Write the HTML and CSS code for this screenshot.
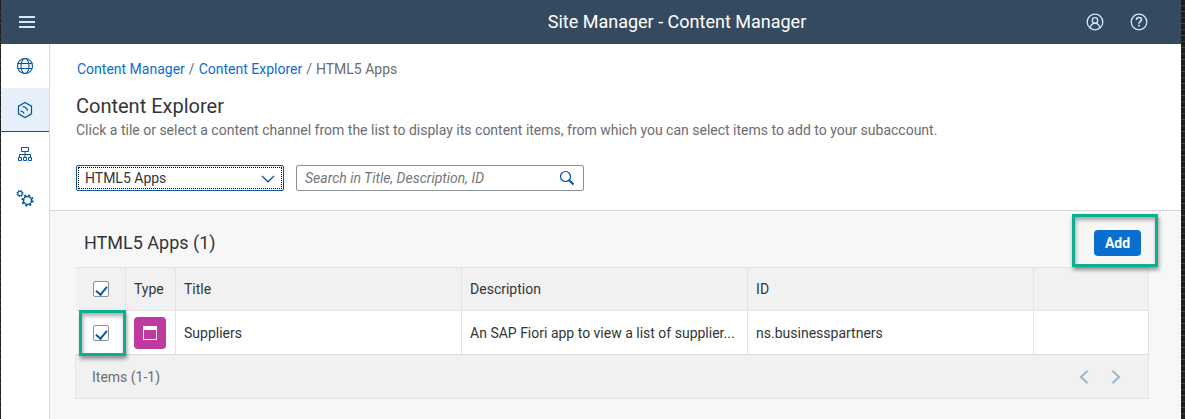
FILE: index.html
```html
<!DOCTYPE html>
<html lang="en">
<head>
<meta charset="utf-8">
<title>Site Manager - Content Manager</title>
<link rel="stylesheet" href="styles.css">
</head>
<body>
<div class="app">
  <header class="shell">
    <button class="shell-button" type="button" aria-label="Menu">
      <svg width="16" height="12" viewBox="0 0 16 12" fill="none" stroke="currentColor" stroke-width="2"><path d="M0 1h16M0 6h16M0 11h16"/></svg>
    </button>
    <h1 class="shell-title">Site Manager - Content Manager</h1>
    <div class="shell-actions">
      <button class="shell-button" type="button" aria-label="Profile">
        <svg width="18" height="18" viewBox="0 0 18 18" fill="none" stroke="currentColor" stroke-width="1.3"><circle cx="9" cy="9" r="7.8"/><circle cx="9" cy="7.4" r="2.7"/><path d="M4.4 14.6C4.6 12 6.4 10.3 9 10.3s4.4 1.700 4.600 4.300"/></svg>
      </button>
      <button class="shell-button" type="button" aria-label="Help">
        <svg width="18" height="18" viewBox="0 0 18 18" fill="none" stroke="currentColor" stroke-width="1.3"><circle cx="9" cy="9" r="7.8"/><path stroke-width="1.6" d="M6.500 7V6.500C6.500 5.200 7.500 4.500 9 4.500s2.500.8 2.500 2c0 1.700-2.500 2-2.500 4.200M9 11.800v1.700"/></svg>
      </button>
    </div>
  </header>
  <div class="body">
    <nav class="rail" aria-label="Main">
      <a class="rail-item" href="#" aria-label="Site Directory">
        <svg width="18" height="18" viewBox="0 0 18 18" fill="none" stroke="currentColor" stroke-width="1.100"><circle cx="9" cy="9" r="7.500"/><ellipse cx="9" cy="9" rx="4" ry="7.500"/><path d="M1.500 6.500h15M1.500 11.500h15"/></svg>
      </a>
      <a class="rail-item rail-item-active" href="#" aria-label="Content Manager">
        <svg width="18" height="18" viewBox="0 0 18 18" fill="none" stroke="currentColor" stroke-width="1.200"><path d="M9 1.500l6.500 3.700v7.600L9 16.500l-6.500-3.700V5.200zM6.500 5.500c2.200 0 4.800 1.800 5 4.300M4.500 10c2 .2 3.200 1.200 3.500 2.700"/></svg>
      </a>
      <a class="rail-item" href="#" aria-label="Channel Manager">
        <svg width="16" height="16" viewBox="0 0 16 16" fill="none" stroke="currentColor"><path d="M4.500 1.500h7v4h-7zM8 5.500v3M2.500 11.500v-3h11v3M8 8.500v3M1.500 11.500h3v3h-3zM6.500 11.500h3v3h-3zM11.500 11.500h3v3h-3z"/></svg>
      </a>
      <a class="rail-item" href="#" aria-label="Settings">
        <svg width="18" height="18" viewBox="0 0 18 18" fill="none" stroke="currentColor"><circle cx="4" cy="4.500" r="2.200" stroke-width="1.100"/><circle cx="4" cy="4.500" r="3" stroke-width="1.200" stroke-dasharray="1.180 1.180"/><circle cx="11.500" cy="11.500" r="4" stroke-width="1.500"/><circle cx="11.500" cy="11.500" r="5.300" stroke-width="1.600" stroke-dasharray="2.080 2.080"/></svg>
      </a>
    </nav>
    <main class="main">
      <section class="intro">
        <nav class="crumbs" aria-label="Breadcrumb">
          <a href="#">Content Manager</a><span>/</span><a href="#">Content Explorer</a><span>/</span><span>HTML5 Apps</span>
        </nav>
        <h2 class="title">Content Explorer</h2>
        <p class="lead">Click a tile or select a content channel from the list to display its content items, from which you can select items to add to your subaccount.</p>
        <div class="filters">
          <div class="picker">
            <select class="picker-field" aria-label="Content channel"><option>HTML5 Apps</option></select>
            <svg class="picker-arrow" width="14" height="8" viewBox="0 0 14 8" fill="none" stroke="currentColor" stroke-width="1.200"><path d="M1 1l6 5.800L13 1"/></svg>
          </div>
          <div class="search">
            <input class="search-field" type="text" aria-label="Search" placeholder="Search in Title, Description, ID">
            <button class="search-button" type="button" aria-label="Search">
              <svg width="16" height="16" viewBox="0 0 16 16" fill="none" stroke="currentColor"><circle cx="6.500" cy="6.500" r="5" stroke-width="1.200"/><path stroke-width="2" d="M10.200 10.200l4.300 4.300"/></svg>
            </button>
          </div>
        </div>
      </section>
      <section class="items">
        <div class="toolbar">
          <h3 class="items-title">HTML5 Apps (1)</h3>
          <div class="add"><button class="add-button" type="button">Add</button><span class="callout callout-add"></span></div>
        </div>
        <table class="grid">
          <colgroup><col class="col-icon"><col class="col-icon"><col class="col-text"><col class="col-text"><col class="col-text"><col></colgroup>
          <thead>
            <tr><th class="pick"><input class="check" type="checkbox" aria-label="Select all" checked></th><th>Type</th><th>Title</th><th>Description</th><th>ID</th><th></th></tr>
          </thead>
          <tbody>
            <tr>
              <td class="pick"><input class="check" type="checkbox" aria-label="Select Suppliers" checked><span class="callout callout-pick"></span></td>
              <td><span class="tile"><svg width="14" height="14" viewBox="0 0 14 14" fill="none" stroke="currentColor"><path d="M.5.5h13v13H.5z"/><path fill="currentColor" stroke="none" d="M0 0h14v4H0z"/></svg></span></td>
              <td>Suppliers</td><td>An SAP Fiori app to view a list of supplier...</td><td>ns.businesspartners</td><td></td>
            </tr>
          </tbody>
        </table>
        <footer class="pager">
          <span>Items (1-1)</span>
          <div class="pager-buttons">
            <button class="page-button" type="button" aria-label="Previous page" disabled><svg width="10" height="14" viewBox="0 0 10 14" fill="none" stroke="currentColor" stroke-width="1.900"><path d="M8.500 .8L2 7l6.500 6.200"/></svg></button>
            <button class="page-button" type="button" aria-label="Next page" disabled><svg width="10" height="14" viewBox="0 0 10 14" fill="none" stroke="currentColor" stroke-width="1.900"><path d="M1.500 .8L8 7l-6.500 6.200"/></svg></button>
          </div>
        </footer>
      </section>
    </main>
  </div>
</div>
</body>
</html>
```
FILE: styles.css
```css
* { box-sizing: border-box; }
body {
  margin: 0;
  padding: 0 4px 0 1px;
  background: repeating-linear-gradient(#1e1e1e 0 5px, #393939 5px 6px, #1e1e1e 6px 11px, #484848 11px 12px);
  color: #32363a;
  font: 14px/20px Roboto, "Liberation Sans", sans-serif;
}
h1, h2, h3, p { margin: 0; font-weight: 400; }
button, input, select { font: inherit; color: inherit; }
button { display: grid; place-items: center; padding: 0; border: 0; background: none; }
svg { display: block; }
a { color: #0a6ed1; text-decoration: none; }

.app { display: flex; flex-direction: column; min-height: 100vh; background: #f7f7f7; }
.shell { display: flex; align-items: center; height: 44px; padding: 0 20px 0 4px; background: #354a5f; color: #d1e8ff; }
.shell-button { width: 44px; height: 44px; }
.shell-title { flex: 1; padding-left: 232px; text-align: center; color: #fff; font-size: 18px; line-height: 24px; }
.shell-actions { display: flex; }

.body { display: flex; flex: 1; }
.rail { width: 49px; flex: none; background: #fff; border-right: 1px solid #d9d9d9; }
.rail-item { display: grid; place-items: center; height: 44px; color: #0854a0; }
.rail-item-active { background: #e5f0fa; border-bottom: 1px solid #0854a0; }

.main { flex: 1; min-width: 0; }
.intro { padding: 15px 26px 19px; background: #fff; border-bottom: 1px solid #d9d9d9; }
.crumbs { display: flex; gap: 4px; padding-left: 1px; color: #6a6d70; }
.title { margin-top: 14px; font-size: 20px; line-height: 26px; }
.lead { margin-top: 1px; color: #6a6d70; }
.filters { display: flex; gap: 12px; margin-top: 25px; }
.picker { position: relative; width: 208px; }
.picker-field {
  display: block; width: 100%; height: 26px; padding: 0 8px; appearance: none;
  border: 1px solid #0854a0; border-radius: 2px; background: #fff;
  outline: 1px dotted #000; outline-offset: -3px;
}
.picker-arrow { position: absolute; top: 10px; right: 9px; color: #0854a0; pointer-events: none; }
.search { display: flex; width: 288px; height: 26px; border: 1px solid #89919a; border-radius: 2px; background: #fff; }
.search-field { flex: 1; min-width: 0; padding: 0 8px; border: 0; outline: 0; background: none; }
.search-field::placeholder { color: #74777a; font-style: italic; opacity: 1; }
.search-button { width: 32px; color: #0854a0; }

.items { padding: 8px 32px 20px 26px; }
.toolbar { display: flex; align-items: center; justify-content: space-between; height: 48px; padding: 0 8px; }
.items-title { font-size: 18px; line-height: 24px; }
.add { position: relative; }
.add-button { width: 47px; height: 26px; border-radius: 4px; background: #0a6ed1; color: #fff; font-weight: 700; }
.callout { position: absolute; border: 3px solid #0aaf8f; box-shadow: 1px 3px 4px #0006, inset 1px 3px 4px #0005; pointer-events: none; }
.callout-add { inset: -16px -17px -11px -22px; }
.callout-pick { inset: -1px -1px -2px 3px; }

.grid { width: 100%; table-layout: fixed; border-collapse: separate; border-spacing: 0; border-top: 1px solid #e4e4e4; }
.col-icon { width: 50px; }
.col-text { width: 26.66%; }
.grid th, .grid td {
  height: 44px; padding: 0 8px; overflow: hidden; text-align: left; text-overflow: ellipsis; white-space: nowrap;
  font-weight: 400; border-right: 1px solid #e4e4e4; border-bottom: 1px solid #e4e4e4;
}
.grid th { background: #f1f1f1; height: 43px; }
.grid td { background: #fff; border-bottom-color: #d9d9d9; }
.grid .pick { position: relative; padding: 0 0 0 17px; overflow: visible; }
.check { display: flex; justify-content: center; align-items: flex-start; width: 16px; height: 16px; margin: 0; padding-top: 2px; appearance: none; border: 1px solid #89919a; border-radius: 2px; background: #fff; }
.check:checked::before {
  content: ""; width: 5px; height: 9px;
  border: solid #0854a0; border-width: 0 2px 2px 0; transform: rotate(40deg);
}
.tile { display: grid; place-items: center; width: 32px; height: 32px; border-radius: 4px; background: #c0399f; color: #fff; }
.pager {
  display: flex; align-items: center; justify-content: space-between; height: 44px; margin-left: -1px; padding: 0 16px;
  background: #f1f1f1; border: 1px solid #e4e4e4; border-top: 0; color: #6a6d70;
}
.pager-buttons { display: flex; }
.page-button { width: 32px; height: 32px; color: #91b4d5; }
```
